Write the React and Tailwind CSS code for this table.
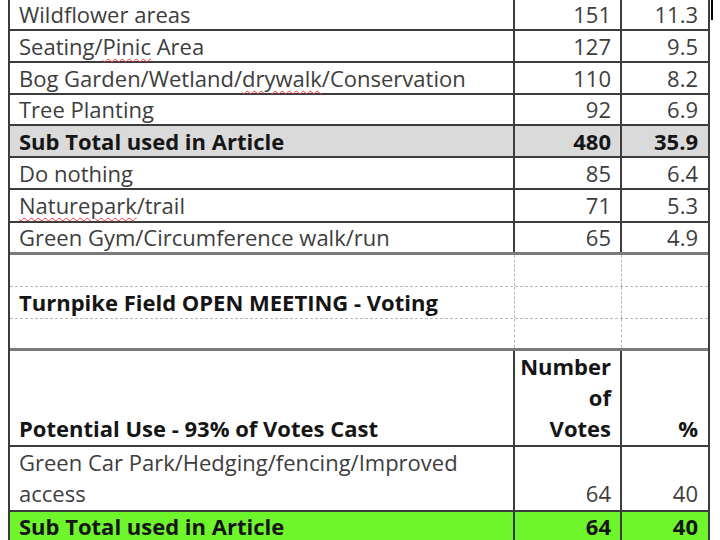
const font = { fontFamily: '"Open Sans", Lato, sans-serif' };

function Typo({ children }) {
  return (
    <span className="underline decoration-wavy decoration-red-500 decoration-1 underline-offset-[3px]">
      {children}
    </span>
  );
}

const solid = 'border-b-2 border-[#3c3c3c]';

const rows = [
  { label: 'Wildflower areas', n: '151', p: '11.3', h: 'h-[31px]', line: solid },
  { label: <>Seating/<Typo>Pinic</Typo> Area</>, n: '127', p: '9.5', h: 'h-[32px]', line: solid },
  { label: <>Bog Garden/Wetland/<Typo>drywalk</Typo>/Conservation</>, n: '110', p: '8.2', h: 'h-[32px]', line: solid },
  { label: 'Tree Planting', n: '92', p: '6.9', h: 'h-[31px]', line: solid },
  { label: 'Sub Total used in Article', n: '480', p: '35.9', h: 'h-[32px]', line: solid, bold: true, bg: 'bg-[#dadada]' },
  { label: 'Do nothing', n: '85', p: '6.4', h: 'h-[32px]', line: solid },
  { label: <><Typo>Naturepark</Typo>/trail</>, n: '71', p: '5.3', h: 'h-[33px]', line: solid },
  { label: 'Green Gym/Circumference walk/run', n: '65', p: '4.9', h: 'h-[32px]', line: 'border-b-[3px] border-[#7a7a7a]' },
];

function Row({ r }) {
  const text = r.bold ? 'font-bold text-[#151515]' : 'text-[#3d3d3d]';
  return (
    <div className={`flex ${r.h} ${r.line} ${r.bg || 'bg-white'} ${text}`}>
      <div className="w-[505px] border-r-2 border-[#3c3c3c] flex items-center pl-[9px]">
        <span>{r.label}</span>
      </div>
      <div className="w-[107px] border-r-2 border-[#3c3c3c] flex items-center justify-end pr-[9px]">{r.n}</div>
      <div className="w-[86px] flex items-center justify-end pr-[10px]">{r.p}</div>
    </div>
  );
}

function GridRow({ children, line }) {
  return (
    <div className={`flex h-[32px] ${line} bg-white`}>
      <div className="w-[505px] border-r border-dashed border-[#b8b8b8] flex items-center pl-[9px] font-bold text-[#151515]">
        {children}
      </div>
      <div className="w-[107px] border-r border-dashed border-[#b8b8b8]" />
      <div className="w-[86px]" />
    </div>
  );
}

export default function App() {
  return (
    <div className="relative w-[720px] h-[540px] overflow-hidden bg-white text-[22px] leading-[31px]" style={font}>
      <div className="absolute left-[711px] top-0 w-[2px] h-[20px] bg-black" />
      <div className="ml-[8px] w-[702px] border-x-2 border-[#3c3c3c]">
        {rows.map((r, i) => (
          <Row key={i} r={r} />
        ))}
        <GridRow line="border-b border-dashed border-[#b8b8b8]" />
        <GridRow line="border-b border-dashed border-[#b8b8b8]">Turnpike Field OPEN MEETING - Voting</GridRow>
        <GridRow line="border-b-[3px] border-[#7a7a7a]" />
        <div className={`flex h-[96px] ${solid} bg-white font-bold text-[#151515]`}>
          <div className="w-[505px] border-r-2 border-[#3c3c3c] flex items-end pl-[9px] pb-[1px]">
            Potential Use - 93% of Votes Cast
          </div>
          <div className="w-[107px] border-r-2 border-[#3c3c3c] flex flex-col items-end justify-end pr-[9px] pb-[1px] text-right">
            <span>Number</span>
            <span>of</span>
            <span>Votes</span>
          </div>
          <div className="w-[86px] flex items-end justify-end pr-[10px] pb-[1px]">%</div>
        </div>
        <div className={`flex h-[65px] ${solid} bg-white text-[#3d3d3d]`}>
          <div className="w-[505px] border-r-2 border-[#3c3c3c] flex items-end pl-[9px] pb-[1px]">
            <span>
              Green Car Park/Hedging/fencing/Improved
              <br />
              access
            </span>
          </div>
          <div className="w-[107px] border-r-2 border-[#3c3c3c] flex items-end justify-end pr-[9px] pb-[1px]">64</div>
          <div className="w-[86px] flex items-end justify-end pr-[10px] pb-[1px]">40</div>
        </div>
        <div className="flex h-[33px] bg-[#6ff52c] font-bold text-[#151515] leading-[28px]">
          <div className="w-[505px] border-r-2 border-[#3c3c3c] flex items-start pl-[9px]">Sub Total used in Article</div>
          <div className="w-[107px] border-r-2 border-[#3c3c3c] flex items-start justify-end pr-[9px]">64</div>
          <div className="w-[86px] flex items-start justify-end pr-[10px]">40</div>
        </div>
      </div>
    </div>
  );
}
